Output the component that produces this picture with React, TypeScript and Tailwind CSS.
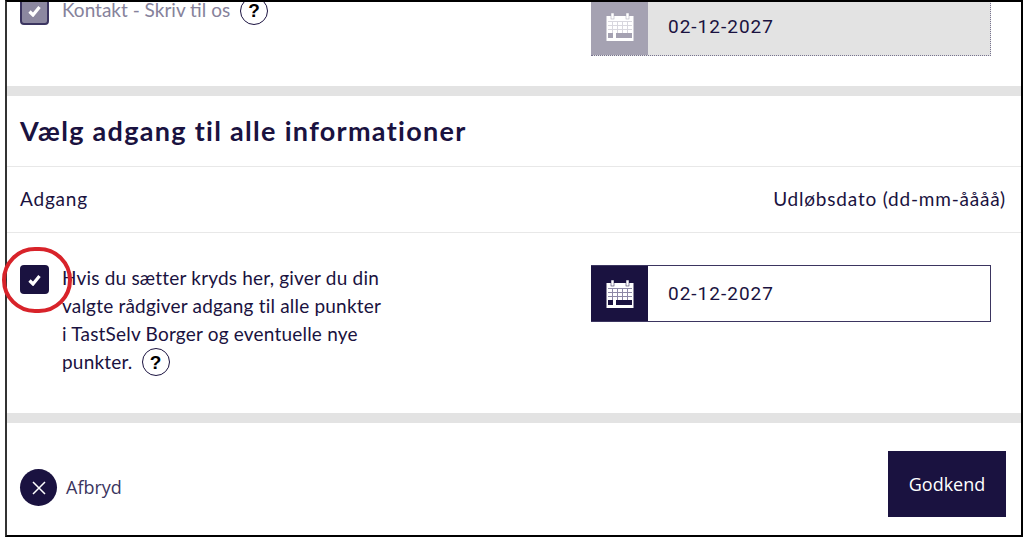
function CalendarIcon({ grid, bar }: { grid: string; bar: string }) {
  return (
    <svg width="28" height="28" viewBox="0 0 28 28" fill="none">
      <rect x="0.5" y="3" width="27" height="25" fill="#fff" />
      <path d="M2 8.5H26M2 12.5H26M2 16.5H26M6.5 8V20M11.5 8V20M16.5 8V20M21.5 8V20" stroke={grid} strokeWidth="1" />
      <rect x="2" y="20" width="5" height="5" fill={bar} />
      <rect x="10" y="20" width="16" height="5" fill={bar} />
      <rect x="5" y="0" width="3" height="6" fill="#fff" stroke={bar} strokeWidth="0.5" />
      <rect x="20" y="0" width="3" height="6" fill="#fff" stroke={bar} strokeWidth="0.5" />
    </svg>
  );
}

function CheckIcon() {
  return (
    <svg width="13" height="12" viewBox="0 0 13 12" fill="none">
      <path d="M1.5 6.5L5 10L11.5 2" stroke="#fff" strokeWidth="3.2" />
    </svg>
  );
}

function HelpBadge() {
  return (
    <span className="inline-flex h-[28px] w-[28px] items-center justify-center rounded-full border border-[#1a1240] bg-white font-['Liberation_Sans',sans-serif] text-[19px] leading-none font-bold text-black">
      ?
    </span>
  );
}

export default function App() {
  return (
    <div className="relative h-[537px] w-[1024px] overflow-hidden bg-white font-['Lato',sans-serif] text-[#1a1240]">
      {/* Screenshot frame */}
      <div className="ml-[5px] mr-[1px] flex h-[537px] flex-col overflow-hidden border-2 border-t-black border-r-black border-b-black border-l-[#333]">
        {/* Clipped row from the section above */}
        <section className="flex h-[84px] shrink-0 items-start overflow-hidden pr-[15px] pl-[13px]">
          <div className="flex w-[571px] shrink-0 items-center -mt-[6px]">
            <span className="mr-[13px] flex h-[29px] w-[29px] items-center justify-center rounded-[4px] border-2 border-[#3b3560] bg-[#8c88a0]">
              <CheckIcon />
            </span>
            <span className="mr-[10px] text-[19px] text-[#86829b]">Kontakt - Skriv til os</span>
            <HelpBadge />
          </div>
          <div className="-mt-[3px] flex h-[57px] w-[400px] border-r border-b border-dotted border-[#77738f] bg-[#e3e3e3]">
            <span className="flex w-[57px] shrink-0 items-center justify-center bg-[#a5a2b2]">
              <CalendarIcon grid="#d8d7de" bar="#a5a2b2" />
            </span>
            <span className="flex items-center pl-[20px] font-['Roboto',sans-serif] text-[19px] tracking-[1px]">02-12-2027</span>
          </div>
        </section>

        <div className="h-[10px] shrink-0 bg-[#e3e3e3]" />

        <h2 className="flex h-[71px] shrink-0 items-center border-b border-[#e8e8e8] pr-[15px] pl-[13px] text-[27px] font-bold tracking-[1.3px]">
          Vælg adgang til alle informationer
        </h2>

        <div className="flex h-[66px] shrink-0 items-center justify-between border-b border-[#e8e8e8] pr-[15px] pl-[13px] text-[19px] tracking-[0.8px]">
          <span>Adgang</span>
          <span>Udløbsdato (dd-mm-åååå)</span>
        </div>

        <section className="flex h-[180px] shrink-0 items-start pt-[32px] pr-[15px] pl-[13px]">
          <div className="flex w-[571px] shrink-0 gap-[13px]">
            <span className="flex h-[29px] w-[29px] shrink-0 items-center justify-center rounded-[4px] bg-[#1a1240]">
              <CheckIcon />
            </span>
            <p className="-mt-[1px] w-[360px] text-[19px] leading-[28px] tracking-[0.2px]">
              Hvis du sætter kryds her, giver du din
              <br />
              valgte rådgiver adgang til alle punkter
              <br />
              i TastSelv Borger og eventuelle nye
              <br />
              <span className="inline-flex items-center gap-[9px]">
                punkter. <HelpBadge />
              </span>
            </p>
          </div>
          <div className="flex h-[57px] w-[400px] border border-l-0 border-[#3b3560]">
            <span className="flex w-[57px] shrink-0 items-center justify-center bg-[#1a1240]">
              <CalendarIcon grid="#8d88a6" bar="#1a1240" />
            </span>
            <span className="flex items-center pt-[1px] pl-[20px] font-['Roboto',sans-serif] text-[19px] tracking-[1px]">02-12-2027</span>
          </div>
        </section>

        <div className="h-[10px] shrink-0 bg-[#e3e3e3]" />

        <footer className="flex flex-1 items-start justify-between pt-[28px] pr-[15px] pl-[13px]">
          <button className="mt-[18px] flex items-center gap-[9px] font-['Open_Sans',sans-serif] text-[18px] text-[#3b3560]">
            <span className="flex h-[37px] w-[37px] items-center justify-center rounded-full bg-[#1a1240]">
              <svg width="14" height="14" viewBox="0 0 14 14" fill="none">
                <path d="M1 1L13 13M13 1L1 13" stroke="#fff" strokeWidth="1.5" />
              </svg>
            </span>
            Afbryd
          </button>
          <button className="h-[66px] w-[118px] bg-[#1a1240] font-['Open_Sans',sans-serif] text-[18px] text-white">Godkend</button>
        </footer>
      </div>

      {/* Red annotation ring */}
      <div className="absolute top-[247px] left-[2px] h-[66px] w-[70px] rounded-full border-4 border-[#d8232a]" />
    </div>
  );
}
